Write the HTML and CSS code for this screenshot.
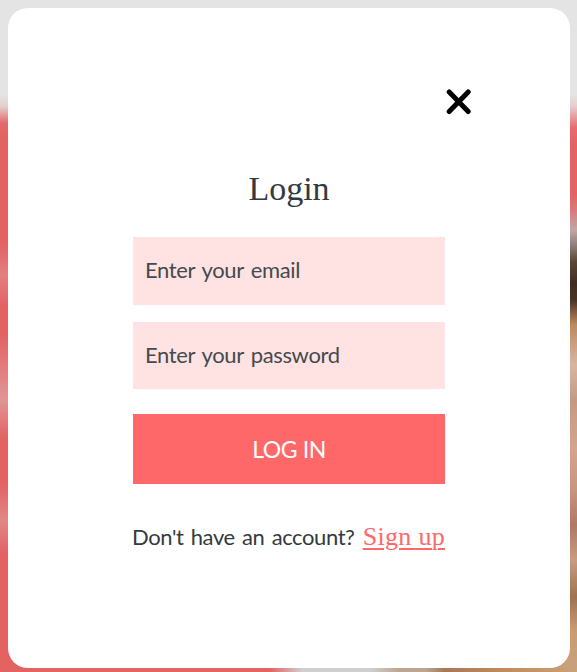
FILE: index.html
```
<!DOCTYPE html>
<html lang="en">
<head>
<meta charset="utf-8">
<title>Login</title>
<link rel="stylesheet" href="styles.css">
</head>
<body>
<main class="modal">
  <button class="close" type="button" aria-label="Close">
    <svg width="26" height="26" viewBox="0 0 26 26"><path d="M3.2 3 22.2 22.5M22.2 3 3.2 22.5" fill="none" stroke="#000" stroke-width="5" stroke-linecap="round"/></svg>
  </button>
  <h1 class="title">Login</h1>
  <form class="form">
    <input class="field email" type="email" placeholder="Enter your email">
    <input class="field password" type="password" placeholder="Enter your password">
    <button class="submit" type="button"><span class="submit-label">LOG IN</span></button>
  </form>
  <p class="signup"><span class="question">Don't have an account?</span><a class="link" href="#">Sign up</a></p>
</main>
</body>
</html>
```
FILE: styles.css
```
* { box-sizing: border-box; }
body {
  margin: 0;
  height: 672px;
  padding: 8px 7px 4px 8px;
  overflow: hidden;
  color: #333a40;
  font-family: Lato, "Liberation Sans", sans-serif;
  background:
    linear-gradient(90deg, #e36363 270px, #cfcfcf 302px, #cfcfcf 370px, #bba592 400px, #bba592 425px, #a87858 445px, #c28a5a 500px, #c8a27c 577px) 0 667px / 577px 5px no-repeat,
    linear-gradient(#e4e4e4 94px, #e4cfd0 106px, #e66a70 128px, #e36363 145px, #e36363 195px, #d87d80 212px, #c0a8a5 230px, #8f8078 245px, #5a4636 262px, #402c22 283px, #4a3325 300px, #bd8a60 325px, #d8b5a2 365px, #c49a85 400px, #d4a490 450px, #c8957e 490px, #b07866 525px, #c89c80 560px, #9c7250 597px, #cb9b70 630px, #c8a27c 672px) 100% 0 / 30px 672px no-repeat,
    linear-gradient(#e4e4e4 94px, #e4d0d0 106px, #e36b6b 123px, #e36363 135px, #e36363 245px, #e38080 275px, #e36363 305px, #e36363 335px, #e29595 400px, #e36363 438px, #e36363 485px, #e28686 520px, #e36363 553px) 0 0 / 30px 672px no-repeat,
    #e4e4e4;
}
.modal {
  height: 660px;
  padding: 81px 125px 0;
  border-radius: 20px;
  background: #fff;
  display: flex;
  flex-direction: column;
}
.close {
  align-self: flex-end;
  width: 26px;
  height: 26px;
  margin-right: -27px;
  padding: 0;
  border: 0;
  background: none;
}
.close svg { display: block; }
.title {
  margin: 52px 0 0;
  height: 44px;
  font: 400 34px/44px "Liberation Serif", serif;
  text-align: center;
}
.form { display: flex; flex-direction: column; margin-top: 26px; }
.field {
  width: 100%;
  height: 68px;
  padding: 0 12px 3px;
  border: 0;
  border-radius: 0;
  background: #ffe3e3;
  font: 400 22px/30px Lato, sans-serif;
  letter-spacing: -0.35px;
  word-spacing: 2px;
}
.field::placeholder { color: #454a4f; opacity: 1; }
.password { height: 67px; margin-top: 17px; }
.submit {
  height: 70px;
  margin-top: 25px;
  padding: 0;
  border: 0;
  background: #ff6868;
  color: #fff;
  font: 400 23px/70px Lato, sans-serif;
  letter-spacing: -0.4px;
}
.signup {
  display: flex;
  justify-content: space-between;
  align-items: baseline;
  margin: 35px -1px 0;
  height: 36px;
  white-space: nowrap;
  font-size: 22px;
  line-height: 36px;
  letter-spacing: -0.4px;
  word-spacing: 2px;
}
.link {
  margin-right: 1px;
  color: #ff6868;
  font: 400 26px/36px "Liberation Serif", serif;
  letter-spacing: 0.3px;
  word-spacing: 0;
  text-decoration-thickness: 2px;
  text-underline-offset: 3px;
}
```
